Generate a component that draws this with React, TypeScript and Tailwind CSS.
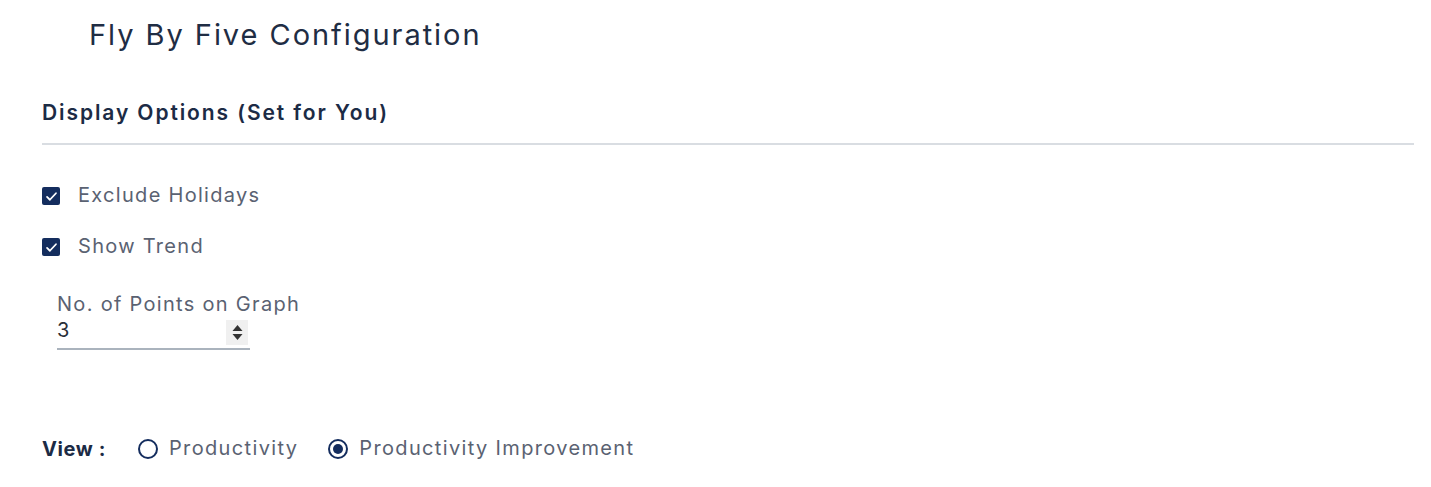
import { useState } from "react";

function CheckRow({ label, checked, onToggle }: { label: string; checked: boolean; onToggle: () => void }) {
  return (
    <label className="flex items-center gap-[18px] h-[18px] cursor-pointer" onClick={onToggle}>
      <span
        className={
          checked
            ? "w-[18px] h-[18px] rounded-[2px] bg-[#142d5e] flex items-center justify-center"
            : "w-[18px] h-[18px] rounded-[2px] border-2 border-[#142d5e] bg-white"
        }
      >
        {checked && (
          <svg viewBox="0 0 16 16" className="w-[13px] h-[13px]" fill="none" stroke="white" strokeWidth="2.2">
            <path d="M2.5 8.5l3.5 3.5 7.5-8" strokeLinecap="round" strokeLinejoin="round" />
          </svg>
        )}
      </span>
      <span className="text-[20px] leading-[24px] text-[#5a6272] tracking-[1.3px] mt-[-3px]">{label}</span>
    </label>
  );
}

function Radio({ label, checked, onSelect }: { label: string; checked: boolean; onSelect: () => void }) {
  return (
    <label className="flex items-center gap-[11px] cursor-pointer" onClick={onSelect}>
      <span className="w-[20px] h-[20px] rounded-full border-2 border-[#142d5e] flex items-center justify-center">
        {checked && <span className="w-[10px] h-[10px] rounded-full bg-[#142d5e]" />}
      </span>
      <span className="text-[20px] leading-[24px] text-[#5a6272] tracking-[1.35px] mt-[-2px]">{label}</span>
    </label>
  );
}

export default function App() {
  const [holidays, setHolidays] = useState(true);
  const [trend, setTrend] = useState(true);
  const [points, setPoints] = useState(3);
  const [view, setView] = useState("improvement");

  return (
    <div className="w-[1431px] h-[487px] bg-white font-['Inter',sans-serif]">
      <h1 className="pl-[89px] pt-[15px] text-[29px] leading-[40px] text-[#1f2d44] tracking-[1.95px]">
        Fly By Five Configuration
      </h1>

      <div className="px-[42px] mt-[44px]">
        <h2 className="text-[21px] leading-[28px] font-semibold text-[#1c2b45] tracking-[1.9px] pb-[16px] border-b-2 border-[#d9dde2] w-[1372px]">
          Display Options (Set for You)
        </h2>

        <div className="flex flex-col gap-[33px] mt-[42px]">
          <CheckRow label="Exclude Holidays" checked={holidays} onToggle={() => setHolidays(!holidays)} />
          <CheckRow label="Show Trend" checked={trend} onToggle={() => setTrend(!trend)} />
        </div>

        <div className="ml-[15px] mt-[36px] w-[193px]">
          <div className="text-[20px] leading-[24px] text-[#5a6272] tracking-[1.3px] whitespace-nowrap">No. of Points on Graph</div>
          <div className="flex items-end justify-between border-b-2 border-[#aab3bd] mt-[2px]">
            <span className="text-[20px] leading-[24px] text-[#2a2f38] pb-[6px]">{points}</span>
            <span className="w-[22px] h-[25px] bg-[#f0f0f0] flex flex-col items-center justify-center gap-[3px] mr-[2px] mb-[3px]">
              <button onClick={() => setPoints(points + 1)} className="block">
                <svg viewBox="0 0 10 6" className="w-[11px] h-[6px]"><path d="M5 0L10 6H0z" fill="#333" /></svg>
              </button>
              <button onClick={() => setPoints(Math.max(1, points - 1))} className="block">
                <svg viewBox="0 0 10 6" className="w-[11px] h-[6px]"><path d="M0 0H10L5 6z" fill="#333" /></svg>
              </button>
            </span>
          </div>
        </div>

        <div className="flex items-center mt-[87px]">
          <span className="text-[20px] leading-[24px] font-bold text-[#1c2b45] tracking-[0.6px] w-[96px]">View :</span>
          <div className="flex items-center gap-[30px]">
            <Radio label="Productivity" checked={view === "productivity"} onSelect={() => setView("productivity")} />
            <Radio label="Productivity Improvement" checked={view === "improvement"} onSelect={() => setView("improvement")} />
          </div>
        </div>
      </div>
    </div>
  );
}
